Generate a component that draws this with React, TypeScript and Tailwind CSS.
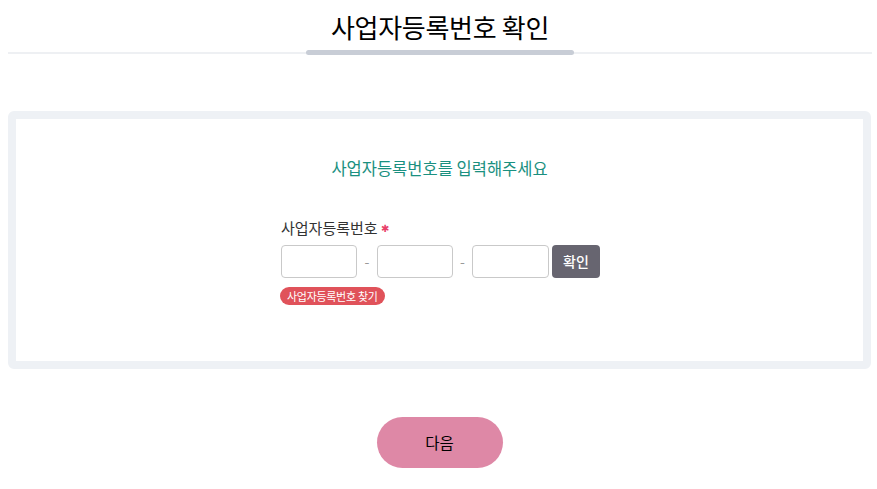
export default function App() {
  return (
    <main
      className="min-h-screen bg-white text-black"
      style={{ fontFamily: '"Noto Sans CJK KR", "Noto Sans", sans-serif' }}
    >
      <header className="relative ml-2 mr-[5px] h-[54px] border-b-2 border-[#eef0f3]">
        <h1 className="pt-[7px] text-center text-[26px] leading-[40px] font-normal tracking-[-0.3px]">
          사업자등록번호 확인
        </h1>
        <div className="absolute left-[298px] top-[50px] h-[5px] w-[268px] rounded-full bg-[#c8cdd6]" />
      </header>

      <section className="mt-[57px] ml-2 mr-[6px] rounded-md border-8 border-[#eef1f5] bg-white">
        <div className="h-[242px] pt-[36px]">
          <h2 className="text-center text-[16.5px] leading-[26px] font-normal text-[#1a9080]">
            사업자등록번호를 입력해주세요
          </h2>
          <div className="ml-[265px] mt-[37px]">
            <label className="flex items-center text-[15px] leading-[20px] text-[#333]">
              사업자등록번호
              <span className="ml-[3px] text-[10px] text-[#e8416a]">✱</span>
            </label>
            <div className="mt-[7px] flex items-center">
              <input className="h-[33px] w-[76px] rounded-[4px] border border-[#c9c9c9] bg-white" />
              <span className="w-[20px] text-center text-[14px] text-[#999]">-</span>
              <input className="h-[33px] w-[76px] rounded-[4px] border border-[#c9c9c9] bg-white" />
              <span className="w-[19px] text-center text-[14px] text-[#999]">-</span>
              <input className="h-[33px] w-[77px] rounded-[4px] border border-[#c9c9c9] bg-white" />
              <button className="ml-[3px] h-[33px] w-[48px] rounded-[4px] bg-[#676570] text-[14px] font-medium text-white">
                확인
              </button>
            </div>
            <button className="mt-[9px] h-[18px] -ml-px rounded-full bg-[#e0525a] px-[7px] text-[11px] leading-[18px] tracking-[-0.3px] text-white">
              사업자등록번호 찾기
            </button>
          </div>
        </div>
      </section>

      <div className="mt-[48px] flex justify-center">
        <button className="ml-[2px] h-[51px] w-[126px] rounded-full bg-[#de88a6] text-[15.5px] text-black">
          다음
        </button>
      </div>
    </main>
  );
}
